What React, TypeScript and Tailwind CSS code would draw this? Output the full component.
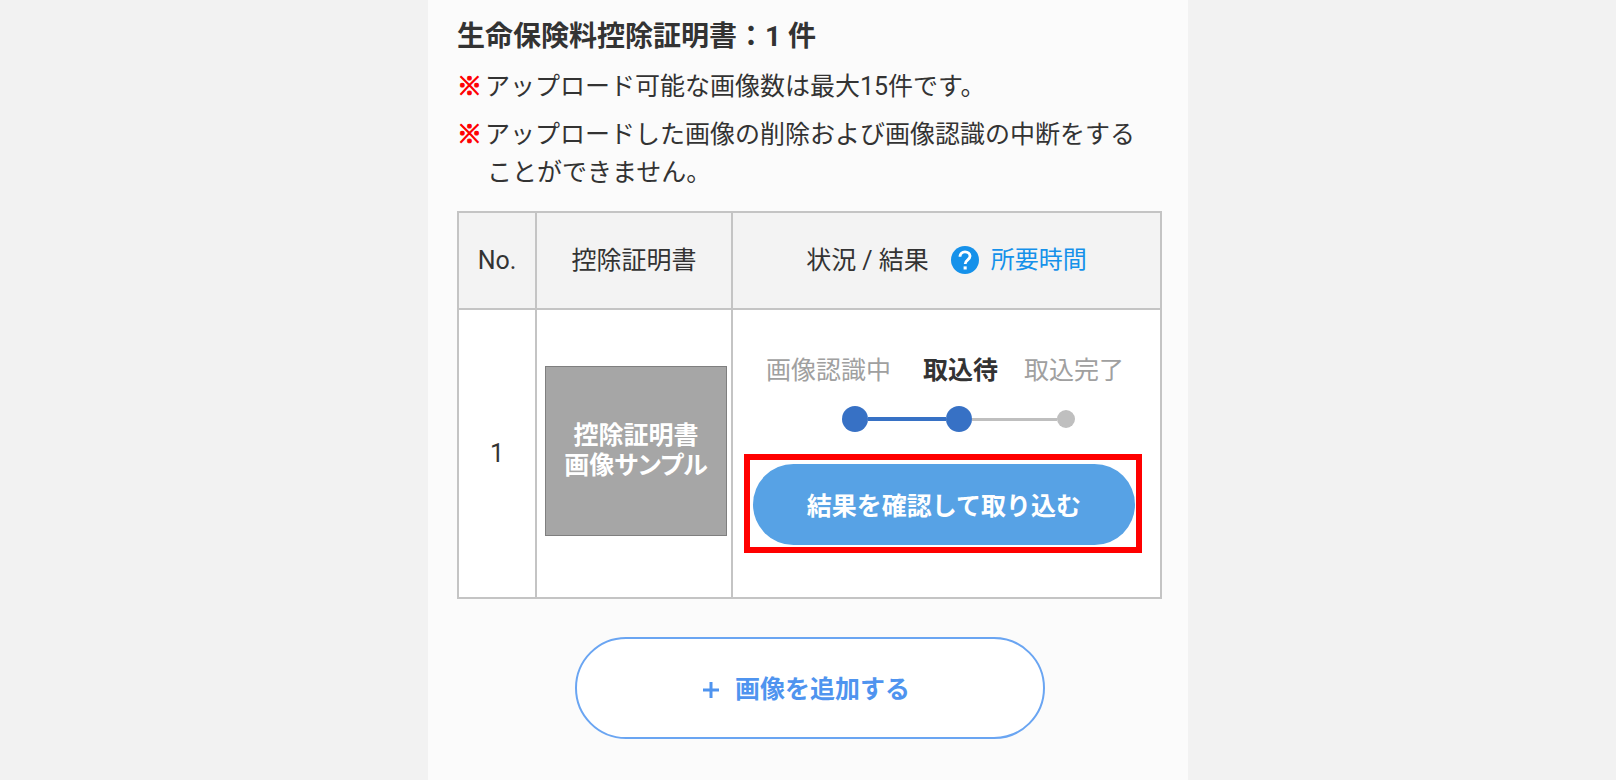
import React from "react";

type Certificate = {
  no: number;
  sample: string[];
};

type NoteProps = {
  children: React.ReactNode;
};

const certificates: Certificate[] = [
  { no: 1, sample: ["控除証明書", "画像サンプル"] },
];

const Note = ({ children }: NoteProps) => {
  return (
    <li className="pl-[30px] -indent-[30px]">
      <span className="mr-[3px] font-bold text-[#ff0000] [-webkit-text-stroke:1px_#ff0000]">
        ※
      </span>
      {children}
    </li>
  );
};

const HelpIcon = () => {
  return (
    <svg viewBox="0 0 28 28" className="size-7" aria-hidden="true">
      <circle cx="14" cy="14" r="14" fill="#1591ea" />
      <path
        d="M9 10.8C9 7.7 11.1 5.8 14 5.8s5 1.8 5 4.5c0 3.4-4.8 3.7-4.8 7.6"
        fill="none"
        stroke="#fff"
        strokeWidth="2.8"
      />
      <rect x="12.6" y="20.4" width="3.1" height="3.1" fill="#fff" />
    </svg>
  );
};

const Progress = () => {
  return (
    <div>
      <div className="ml-[22px] flex">
        <span className="mr-8 text-[#a0a0a0]">画像認識中</span>
        <span className="mr-[26px] font-bold">取込待</span>
        <span className="text-[#a0a0a0]">取込完了</span>
      </div>
      <div className="ml-[98px] mt-4 flex h-[26px] items-center">
        <span className="size-[26px] rounded-full bg-[#3771c5]"></span>
        <span className="h-[4px] w-[78px] bg-[#3771c5]"></span>
        <span className="size-[26px] rounded-full bg-[#3771c5]"></span>
        <span className="h-[3px] w-[85px] bg-[#bfbfbf]"></span>
        <span className="size-[18px] rounded-full bg-[#bfbfbf]"></span>
      </div>
    </div>
  );
};

const CertificateTable = () => {
  return (
    <table className="mt-[19px] w-full table-fixed border-collapse bg-white">
      <colgroup>
        <col className="w-[78px]" />
        <col className="w-[196px]" />
        <col />
      </colgroup>
      <thead>
        <tr className="h-[97px] bg-[#f3f3f3]">
          <th className="border-2 border-[#c4c4c4] font-normal">No.</th>
          <th className="border-2 border-[#c4c4c4] font-normal">控除証明書</th>
          <th className="border-2 border-[#c4c4c4] font-normal">
            <div className="flex items-center justify-center">
              状況 / 結果
              <a
                href="#time"
                className="ml-[22px] flex items-center gap-3 pb-[2px] text-[24px] text-[#1591ea]"
              >
                <HelpIcon />
                所要時間
              </a>
            </div>
          </th>
        </tr>
      </thead>
      <tbody>
        {certificates.map((item) => (
          <tr key={item.no} className="h-[289px]">
            <td className="border-2 border-[#c4c4c4] text-center">{item.no}</td>
            <td className="border-2 border-[#c4c4c4] pb-[6px] pl-2 pr-1">
              <div className="flex h-[170px] flex-col items-center justify-center border border-[#7f7f7f] bg-[#a6a6a6] font-bold leading-[30px] text-white [font-feature-settings:'palt']">
                {item.sample.map((line) => (
                  <span key={line}>{line}</span>
                ))}
              </div>
            </td>
            <td className="border-2 border-[#c4c4c4] pb-[2px] pl-[11px] pr-[18px]">
              <Progress />
              <div className="mt-[22px] border-[6px] border-[#ff0000] pb-[2px] pl-[3px] pr-px pt-1">
                <button
                  type="button"
                  className="block h-[81px] w-full rounded-full bg-[#57a2e5] pt-1 font-bold text-white"
                >
                  結果を確認して取り込む
                </button>
              </div>
            </td>
          </tr>
        ))}
      </tbody>
    </table>
  );
};

const App = () => {
  return (
    <div className="min-h-screen bg-[#f2f2f2] font-['Roboto','Noto_Sans_CJK_JP',sans-serif] text-[25px] leading-[38px] text-[#333333]">
      <main className="mx-auto min-h-screen max-w-[760px] bg-[#fbfbfb] pb-10 pl-[29px] pr-[26px] pt-[18px]">
        <h1 className="text-[28px] font-bold">生命保険料控除証明書：1 件</h1>
        <ul className="mt-3 space-y-[10px] pr-4">
          <Note>アップロード可能な画像数は最大15件です。</Note>
          <Note>
            アップロードした画像の削除および画像認識の中断をすることができません。
          </Note>
        </ul>
        <CertificateTable />
        <button
          type="button"
          className="mx-auto mt-[38px] flex h-[102px] w-full max-w-[470px] items-center justify-center gap-4 rounded-full border-2 border-[#6aa5f2] bg-white pr-[6px] pt-1 font-bold text-[#4f94ef]"
        >
          <svg viewBox="0 0 16 16" className="size-4" aria-hidden="true">
            <path d="M8 0v16M0 8h16" stroke="currentColor" strokeWidth="3" />
          </svg>
          画像を追加する
        </button>
      </main>
    </div>
  );
};

export default App;
